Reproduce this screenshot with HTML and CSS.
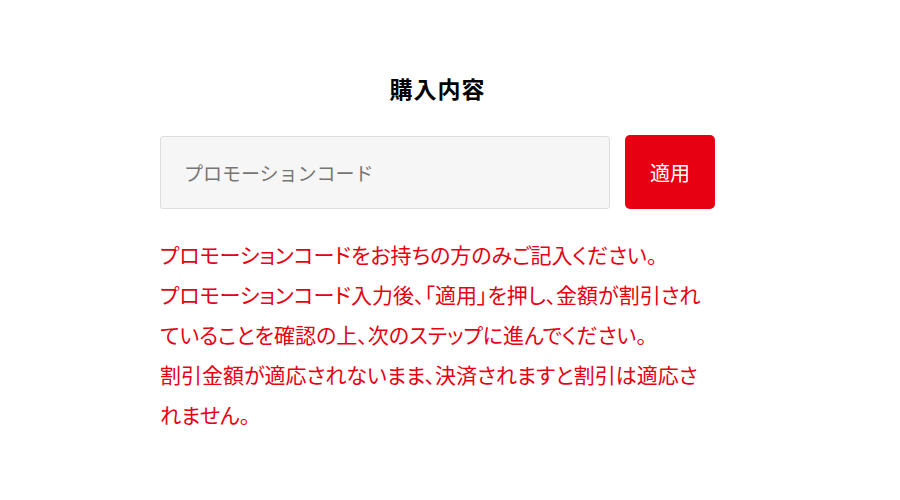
FILE: index.html
```html
<!DOCTYPE html>
<html lang="ja">
<head>
<meta charset="utf-8">
<title>購入内容</title>
<link rel="stylesheet" href="styles.css">
</head>
<body>
<main class="page">
  <section class="purchase">
    <h2 class="purchase-title">購入内容</h2>
    <form class="promo-row">
      <input class="promo-input" type="text" placeholder="プロモーションコード">
      <button class="promo-button" type="button">適用</button>
    </form>
    <div class="promo-notes">
      <p>プロモーションコードをお持ちの方のみご記入ください。</p>
      <p>プロモーションコード入力後、「適用」を押し、金額が割引されていることを確認の上、次のステップに進んでください。</p>
      <p>割引金額が適応されないまま、決済されますと割引は適応されません。</p>
    </div>
  </section>
</main>
</body>
</html>
```

FILE: styles.css
```css
html, body {
  margin: 0;
  padding: 0;
  background: #ffffff;
}

body {
  font-family: "Noto Sans CJK JP", "Noto Sans", sans-serif;
  color: #000;
}

.page {
  padding: 72px 0 0 160px;
}

.purchase {
  width: 555px;
}

.purchase-title {
  margin: 0 0 31px;
  font-size: 23px;
  line-height: 32px;
  font-weight: 700;
  text-align: center;
  letter-spacing: 1px;
}

.promo-row {
  display: flex;
  align-items: flex-end;
  gap: 15px;
  margin: 0;
}

.promo-input {
  box-sizing: border-box;
  width: 450px;
  height: 73px;
  margin: 0;
  padding: 0 23px;
  border: 1px solid #dedede;
  border-radius: 3px;
  background: #f6f6f6;
  font-family: inherit;
  font-size: 19px;
  color: #333;
  outline: none;
}

.promo-input::placeholder {
  color: #757575;
}

.promo-button {
  box-sizing: border-box;
  width: 90px;
  height: 74px;
  margin: 0;
  padding: 0;
  border: none;
  border-radius: 5px;
  background: #e60012;
  color: #fff;
  font-family: inherit;
  font-size: 20px;
  cursor: pointer;
}

.promo-notes {
  margin-top: 25px;
  color: #e60012;
  font-size: 21px;
  line-height: 40px;
  font-feature-settings: "palt";
}

.promo-notes p {
  margin: 0;
}
```
